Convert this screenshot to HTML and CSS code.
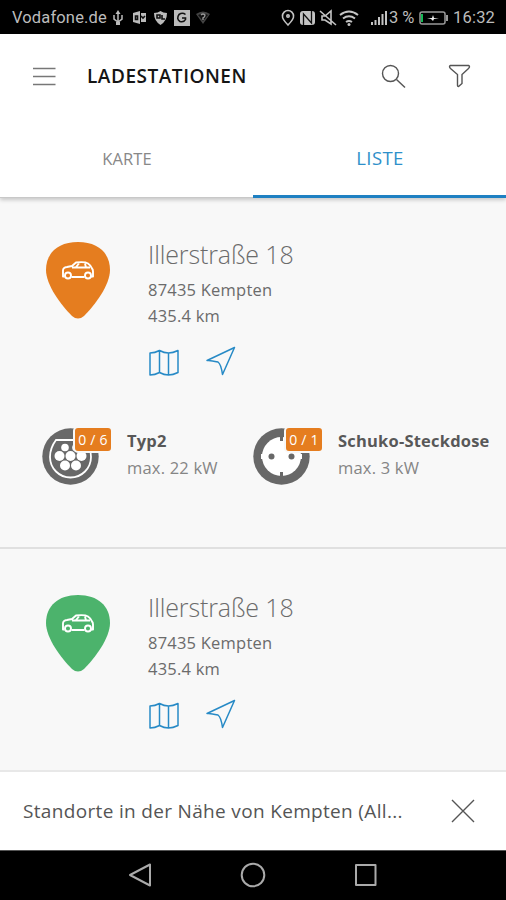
FILE: index.html
```html
<!DOCTYPE html>
<html lang="de">
<head>
<meta charset="utf-8">
<title>Ladestationen</title>
<link rel="stylesheet" href="styles.css">
</head>
<body>
<svg class="defs" width="0" height="0">
  <defs>
    <symbol id="pin" viewBox="0 0 64 77">
      <path class="pin-shape" d="M32 0C12 0 0 11 0 28c0 15 15 35 26 46q6 5 12 0C49 63 64 43 64 28 64 11 52 0 32 0z"/>
      <g fill="none" stroke="#fff" stroke-width="1.900" stroke-linejoin="round">
        <path d="M18.500 34.500H17v-6q0-3 4-3.500l5-1 4-3.500q9-1 12 1 3 2 4 5 1 1 1 3v5h-2.500M25.500 35h13M26 25.500h18M30 25l3-3.500M39 21.500l1 4"/>
        <circle cx="22" cy="33.500" r="3"/><circle cx="42" cy="33.500" r="3"/>
      </g>
    </symbol>
    <symbol id="map" viewBox="0 0 30 27">
      <path d="M1 4Q6 4 10.500 1.500Q15 4 19.500 4Q24 4 29 1.500V23.500Q24 26 19.500 26Q15 26 10.500 23.500Q6 26 1 26zM10.500 1.500v22M19.500 4v22"/>
    </symbol>
    <symbol id="arrow" viewBox="0 0 30 30">
      <path d="M28.500 1.500L1 14.500Q4 14 12 16 15 18 16.500 28.500z"/>
    </symbol>
  </defs>
</svg>
<div class="screen">
  <div class="status">
    <span class="carrier">Vodafone.de</span>
    <svg class="status-left" width="100" height="20" viewBox="0 0 100 20">
      <g fill="none" stroke="#bbb" stroke-width="1.500"><path d="M6 17V4M2 7v4l4 3 4-3V7"/></g>
      <path fill="#bbb" d="M6 2l2.500 4h-5zM4 14h4v3H4zM21 5l7-2v13l-7-2zM29 5h5v9h-5zM42 5q4 0 6.500-2 2.500 2 6.500 2 0 8-6.500 12-6.500-4-6.500-12zM62 2h16v16H62z"/>
      <path fill="none" stroke="#111" stroke-width="1.600" d="M23.500 8v3.500h2V8zM29 8l2 2 2-2M45 10V7h3v3zM50 7v4h3M73.500 6.500q-3-2.500-6.500 0-3 4.500 1 7 4 1 5.500-2V10H70"/>
      <path fill="#444" d="M84 6q7-5 14 0l-7 10z"/><path d="M86 7q5-3 10 0l-5 6z" fill="#111"/><path d="M89 7q2-2 4 0 0 2-2 3v2" fill="none" stroke="#999" stroke-width="1.400"/>
    </svg>
    <svg class="status-right" width="108" height="20" viewBox="0 0 108 20">
      <g fill="none" stroke="#c4c4c4" stroke-width="1.600">
        <path d="M7 17Q1 11 1.500 8a5.500 5.500 0 0 1 11 0Q13 11 7 17z"/><circle cx="7" cy="8" r="1.200"/>
        <path d="M41 8h3l6-5v13l-6-4h-3zM39 3l16 14"/>
        <path d="M59 7q9-7 18 0M62 10.500q6-4.500 12 0M65 14q3-2 6 0" stroke-width="2"/>
      </g>
      <circle cx="68" cy="16.500" r="1.500" fill="#c4c4c4"/>
      <rect x="19" y="3" width="15" height="14" rx="3" fill="#c4c4c4"/><path d="M22.500 17V6l8 9V3" fill="none" stroke="#111" stroke-width="1.300"/>
      <path d="M91 17v-3M94.500 17v-5M98 17V9M101.500 17V6M105 17V3" stroke="#c4c4c4" stroke-width="2"/>
    </svg>
    <span class="percent">3 %</span>
    <svg class="battery" width="29" height="14" viewBox="0 0 29 14">
      <rect x="1" y="1" width="25" height="12" rx="2" fill="none" stroke="#999" stroke-width="1.500"/><path d="M28 4v6" stroke="#999" stroke-width="2"/><path d="M3 3v8" stroke="#15b855" stroke-width="2"/><path d="M8 7h5l1-3 1 3h5l-5 1-1 2-2-2z" fill="#eee"/>
    </svg>
    <span class="clock">16:32</span>
  </div>

  <header class="header">
    <svg class="menu" width="23" height="19" viewBox="0 0 23 19"><path d="M0 1.500h22.500M0 9.500h22.500M0 17.500h22.500" stroke="#777" stroke-width="1.400"/></svg>
    <h1>LADESTATIONEN</h1>
    <svg class="search" width="25" height="25" viewBox="0 0 25 25" fill="none" stroke="#555" stroke-width="1.400"><circle cx="9.500" cy="9.500" r="8"/><path d="M15.500 15.500L24 23.500"/></svg>
    <svg class="filter" width="23" height="24" viewBox="0 0 23 24" fill="none" stroke="#555" stroke-width="1.400"><path d="M2.500 1.500h18q2 1 0 3l-6.500 6v9l-3.500 3q-1 0-1-1v-11L2.500 4.500q-2-2 0-3z"/></svg>
  </header>
  <nav class="tabs">
    <div class="tab"><span class="karte">KARTE</span></div>
    <div class="tab active"><span class="liste">LISTE</span></div>
  </nav>

  <main class="list">
    <section class="station">
      <div class="place">
        <svg class="pin orange" width="64" height="77"><use href="#pin"/></svg>
        <div class="info">
          <h2><span>Illerstraße 18</span></h2>
          <p class="city">87435 Kempten</p>
          <p class="distance">435.4 km</p>
          <div class="actions"><svg width="30" height="27"><use href="#map"/></svg><svg width="30" height="30"><use href="#arrow"/></svg></div>
        </div>
      </div>
      <div class="plugs">
        <div class="plug">
          <div class="socket">
            <svg width="57" height="57" viewBox="0 0 57 57">
              <circle cx="28.500" cy="28.500" r="28.200" fill="#686868"/>
              <path d="M14 12h29q6 8 6 17a20.500 20.500 0 0 1-41 0q0-9 6-17z" fill="#686868" stroke="#fff" stroke-width="1.800"/>
              <g fill="#fff"><circle cx="23" cy="19.500" r="3.800"/><circle cx="34" cy="19.500" r="3.800"/><circle cx="17.500" cy="28" r="5"/><circle cx="28.500" cy="28" r="5"/><circle cx="39.500" cy="28" r="5"/><circle cx="23" cy="37.500" r="5"/><circle cx="34" cy="37.500" r="5"/></g>
            </svg>
            <span class="badge">0 / 6</span>
          </div>
          <div class="spec"><b class="typ">Typ2</b><span class="power22">max. 22 kW</span></div>
        </div>
        <div class="plug">
          <div class="socket">
            <svg width="57" height="57" viewBox="0 0 57 57">
              <circle cx="28.500" cy="28.500" r="28.200" fill="#686868"/><circle cx="28.500" cy="28.500" r="19.500" fill="#fff"/>
              <path d="M8 26h5v5H8zM44 26h5v5h-5z" fill="#fff"/><path d="M27 8h3v5h-3zM27 44h3v5h-3z" fill="#686868"/>
              <circle cx="18.500" cy="28.500" r="3" fill="#686868"/><circle cx="38.500" cy="28.500" r="3" fill="#686868"/>
            </svg>
            <span class="badge">0 / 1</span>
          </div>
          <div class="spec"><b class="schuko">Schuko-Steckdose</b><span class="power3">max. 3 kW</span></div>
        </div>
      </div>
    </section>
    <section class="station">
      <div class="place">
        <svg class="pin green" width="64" height="77"><use href="#pin"/></svg>
        <div class="info">
          <h2><span>Illerstraße 18</span></h2>
          <p class="city">87435 Kempten</p>
          <p class="distance">435.4 km</p>
          <div class="actions"><svg width="30" height="27"><use href="#map"/></svg><svg width="30" height="30"><use href="#arrow"/></svg></div>
        </div>
      </div>
    </section>
  </main>

  <footer class="notice">
    <span>Standorte in der Nähe von Kempten (All...</span>
    <svg width="24" height="24" viewBox="0 0 24 24"><path d="M1 1l22 22M23 1L1 23" stroke="#555" stroke-width="1.400"/></svg>
  </footer>
  <div class="softkeys">
    <svg width="24" height="26" viewBox="0 0 24 26"><path d="M22 2.500v21L2 13z"/></svg>
    <svg width="26" height="26" viewBox="0 0 26 26"><circle cx="13" cy="13" r="11.300"/></svg>
    <svg width="24" height="26" viewBox="0 0 24 26"><rect x="2" y="3" width="19.500" height="20"/></svg>
  </div>
</div>
</body>
</html>
```
FILE: styles.css
```css
* { box-sizing: border-box; margin: 0; padding: 0; }
body { background: #fff; font-family: "Open Sans", sans-serif; }
svg { display: block; flex: none; }
.defs { position: absolute; }
.screen { width: 506px; height: 900px; display: flex; flex-direction: column; overflow: hidden; }
.status { height: 34px; flex: none; background: #000; color: #bcbcbc; display: flex; align-items: center; padding: 1px 0 0 12px; font: 16.500px Roboto, sans-serif; white-space: nowrap; }
.carrier { width: 100px; letter-spacing: 0.150px; }
.status-left { margin-right: 69px; }
.percent { width: 29px; letter-spacing: 0; }
.battery { margin-left: 1px; }
.clock { margin-left: 5px; letter-spacing: 0.200px; }
.header { height: 84px; flex: none; display: flex; align-items: center; padding: 0 35px 0 33px; position: relative; z-index: 2; background: #fff; }
.header h1 { margin-left: 31px; flex: 1; font-size: 19px; font-weight: 600; color: #151515; letter-spacing: 0.530px; line-height: 26px; }
.filter { margin-left: 42px; }
.tabs { height: 80px; flex: none; display: flex; background: #fff; border-bottom: 1px solid #c8c8c8; box-shadow: 0 2px 4px #00000033; position: relative; z-index: 1; }
.tab { flex: 1; display: flex; align-items: center; justify-content: center; font-size: 16.500px; color: #888; padding: 1px 0 0 1px; }
.karte { letter-spacing: 0.150px; }
.tab.active { color: #2e90ca; font-size: 18.500px; padding: 1px 0 0 1px; border-bottom: 3px solid #1e80c2; margin-bottom: -1px; }
.liste { letter-spacing: 0.400px; }
.list { flex: 1; min-height: 0; background: #f8f8f8; overflow: hidden; }
.station { height: 353px; padding: 47px 0 0 42px; }
.station:first-child { height: 351px; padding-top: 44px; border-bottom: 2px solid #e0e0e0; }
.station:last-child { padding-top: 46px; }
.place { display: flex; height: 143px; padding-left: 4px; }
.info { margin-left: 38px; margin-top: -5px; color: #6b6b6b; }
.orange { fill: #e57d1f; }
.green { fill: #4cb36c; }
.info h2 { font-weight: 300; font-size: 25px; line-height: 34px; letter-spacing: -0.130px; white-space: nowrap; }
.info p { font-size: 16.500px; line-height: 27px; margin-top: 5px; letter-spacing: 0.220px; }
.info .distance { margin-top: -1px; }
.actions { display: flex; gap: 27px; margin: 17px 0 0 1px; align-items: flex-end; fill: none; stroke: #278ac6; stroke-width: 1.500; stroke-linejoin: round; }
.plugs { display: flex; margin-top: 43px; }
.plug { width: 211px; display: flex; }
.socket { width: 57px; height: 57px; position: relative; }
.badge { position: absolute; left: 31px; top: -2px; width: 40px; height: 27px; border: 2px solid #f8f8f8; border-radius: 5px; background: #e57d1f; color: #fff; font-size: 14px; line-height: 23px; letter-spacing: 0.200px; text-align: center; white-space: nowrap; }
.spec { margin: -1px 0 0 28px; display: flex; flex-direction: column; font-size: 16.500px; line-height: 27px; letter-spacing: 0.200px; color: #858585; white-space: nowrap; }
.spec b { font-weight: 700; color: #585858; }
.notice { height: 80px; flex: none; background: #fff; border-top: 2px solid #e8e8e8; display: flex; align-items: center; justify-content: space-between; padding: 0 31px 1px 23px; color: #555; font-size: 19px; letter-spacing: 0.330px; white-space: nowrap; }
.softkeys { height: 50px; flex: none; background: #000; border-top: 1px solid #555; display: flex; align-items: center; justify-content: center; gap: 88px; padding: 0 0 1px; fill: none; stroke: #aaa; stroke-width: 2; stroke-linejoin: round; }
```
